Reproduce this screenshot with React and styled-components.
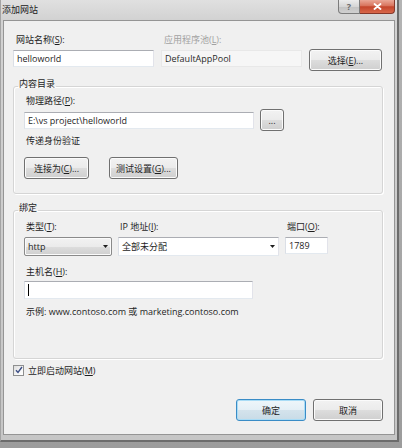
import React from 'react';
import styled, { createGlobalStyle, css } from 'styled-components';

const FONT = `"Open Sans", "Noto Sans CJK SC", sans-serif`;

const GlobalStyle = createGlobalStyle`
  html, body { margin: 0; padding: 0; }
  body { background: #a8a8a8; font-family: ${FONT}; }
  *, *::before, *::after { box-sizing: border-box; }
`;

const Page = styled.div`
  width: 402px;
  height: 448px;
  background: linear-gradient(to bottom, #b4b4b4, #9c9c9c);
`;

const Window = styled.div`
  width: 399px;
  height: 442px;
  display: flex;
  flex-direction: column;
  background: linear-gradient(to bottom, #e0e0e0 0px, #d2d2d2 20px, #c6c6c6 100%);
  border-left: 1px solid #a4a4a4;
  border-right: 2px solid #6c6c6c;
  border-bottom: 2px solid #6c6c6c;
  font-family: ${FONT};
  font-size: 9px;
  color: #1e1e1e;
`;

const TitleBar = styled.div`
  height: 20px;
  flex: none;
  display: flex;
  align-items: flex-start;
  justify-content: space-between;
  padding: 0 2px 0 1px;
`;

const Title = styled.span`
  line-height: 20px;
  color: #202020;
`;

const CaptionButtons = styled.div`
  display: flex;
  height: 14px;
`;

const HelpButton = styled.div`
  width: 22px;
  height: 14px;
  display: flex;
  align-items: center;
  justify-content: center;
  border: 1px solid #7c7c7c;
  border-top: none;
  border-radius: 0 0 0 4px;
  background: linear-gradient(to bottom, #ececec 0%, #d6d6d6 50%, #c2c2c2 51%, #d0d0d0 100%);
  color: #6a6a6a;
  font-weight: bold;
  font-size: 9px;
`;

const CloseButton = styled.div`
  width: 35px;
  height: 14px;
  display: flex;
  align-items: center;
  justify-content: center;
  border: 1px solid #85382a;
  border-top: none;
  border-left: none;
  border-radius: 0 0 4px 0;
  background: linear-gradient(to bottom, #eaa796 0%, #d8735c 45%, #c4452b 52%, #d8674a 100%);
`;

const Client = styled.div`
  flex: 1;
  margin: 0 2px 5px 2px;
  border: 1px solid #959595;
  background: #f0f0f0;
  padding: 13px 11px 0 9px;
  display: flex;
  flex-direction: column;
`;

const TopGrid = styled.div`
  display: grid;
  grid-template-columns: 141px 141px 73px;
  column-gap: 7px;
  row-gap: 3px;
  align-items: start;
`;

const Label = styled.div`
  line-height: 12px;
  height: 12px;
  white-space: nowrap;
  padding-left: ${p => p.$indent ?? 2}px;
  margin-top: ${p => p.$mt ?? 0}px;
  color: ${p => (p.$disabled ? '#a2a2a2' : '#1e1e1e')};
`;

const TextBox = styled.div`
  height: ${p => p.$h ?? 17}px;
  width: ${p => (p.$w ? `${p.$w}px` : 'auto')};
  margin-top: ${p => p.$mt ?? 0}px;
  display: flex;
  align-items: center;
  padding: 0 3px;
  border: 1px solid;
  white-space: nowrap;
  overflow: hidden;
  ${p =>
    p.$disabled
      ? css`
          border-color: #e8e8e8;
          background: #f6f6f6;
          color: #2a2a2a;
        `
      : css`
          border-color: #abadb3 #e2e3ea #e3e9ef #dbdfe6;
          background: #fff;
        `}
`;

const Caret = styled.span`
  width: 1px;
  height: 12px;
  background: #000;
`;

const Button = styled.button`
  height: 22px;
  width: ${p => p.$w}px;
  padding: 0;
  margin: 0;
  font: 9px ${FONT};
  color: #1e1e1e;
  border: 1px solid ${p => (p.$default ? '#3a8cc6' : '#707070')};
  border-radius: 3px;
  background: ${p =>
    p.$default
      ? 'linear-gradient(to bottom, #eef6fa 0%, #e4eff6 50%, #d4e3ec 51%, #c8dbe6 100%)'
      : 'linear-gradient(to bottom, #f2f2f2 0%, #ebebeb 50%, #dddddd 51%, #cfcfcf 100%)'};
  box-shadow: inset 0 0 0 1px ${p => (p.$default ? '#a9dcf6' : '#fbfbfb')};
`;

const Group = styled.fieldset`
  margin: ${p => p.$mt}px 0 0 0;
  padding: 0 0 ${p => p.$pb}px 4px;
  border: 1px solid #d5d5d5;
  border-radius: 3px;
  box-shadow: inset 1px 1px 0 #fff, 1px 1px 0 #fff;
  min-width: 0;
`;

const Legend = styled.legend`
  padding: 2px 1px 6px;
  margin: 0;
  line-height: 12px;
  font-size: 9px;
`;

const GroupBody = styled.div`
  padding-left: 6px;
  display: flex;
  flex-direction: column;
  align-items: flex-start;
`;

const Row = styled.div`
  display: flex;
  align-items: center;
  gap: ${p => p.$gap ?? 0}px;
  margin-top: ${p => p.$mt ?? 0}px;
`;

const BindGrid = styled.div`
  display: grid;
  grid-template-columns: 88px 161px 43px;
  column-gap: 6px;
  row-gap: 4px;
  margin-top: 1px;
  align-items: start;
`;

const Select = styled.div`
  height: 19px;
  display: flex;
  align-items: center;
  justify-content: space-between;
  padding: 0 3px 0 3px;
  ${p =>
    p.$flat
      ? css`
          border: 1px solid;
          border-color: #abadb3 #e2e3ea #e3e9ef #dbdfe6;
          background: #fff;
        `
      : css`
          border: 1px solid #8a8a8a;
          border-radius: 2px;
          background: linear-gradient(to bottom, #f2f2f2 0%, #ebebeb 50%, #dddddd 51%, #cfcfcf 100%);
          box-shadow: inset 0 0 0 1px #fbfbfb;
        `}
`;

const Arrow = () => (
  <svg width="5" height="3" viewBox="0 0 5 3">
    <path d="M0 0 H5 L2.5 3 Z" fill="#1e1e1e" />
  </svg>
);

const CheckRow = styled.label`
  display: flex;
  align-items: center;
  gap: 4px;
  margin-top: 5px;
  height: 12px;
`;

const CheckBox = styled.span`
  width: 11px;
  height: 11px;
  display: flex;
  align-items: center;
  justify-content: center;
  border: 1px solid #8e8f8f;
  background: linear-gradient(135deg, #dcdcdc 0%, #f6f6f6 60%, #ffffff 100%);
`;

const Footer = styled.div`
  display: flex;
  justify-content: flex-end;
  gap: 7px;
  margin-top: 23px;
`;

const K = styled.u`
  text-decoration: underline;
  text-underline-offset: 1px;
`;

export default function App() {
  return (
    <>
      <GlobalStyle />
      <Page>
        <Window>
          <TitleBar>
            <Title>添加网站</Title>
            <CaptionButtons>
              <HelpButton>?</HelpButton>
              <CloseButton>
                <svg width="9" height="7" viewBox="0 0 9 7">
                  <path d="M1.5 1 L7.5 6 M7.5 1 L1.5 6" stroke="#fff" strokeWidth="1.8" strokeLinecap="round" />
                </svg>
              </CloseButton>
            </CaptionButtons>
          </TitleBar>
          <Client>
            <TopGrid>
              <Label $indent={3}>网站名称(<K>S</K>):</Label>
              <Label $indent={3} $disabled>应用程序池(<K>L</K>):</Label>
              <span />
              <TextBox $mt={1}>helloworld</TextBox>
              <TextBox $mt={1} $disabled>DefaultAppPool</TextBox>
              <Button $w={73}>选择(<K>E</K>)...</Button>
            </TopGrid>

            <Group $mt={5} $pb={14}>
              <Legend>内容目录</Legend>
              <GroupBody>
                <Label $mt={-1}>物理路径(<K>P</K>):</Label>
                <Row $gap={6} $mt={2}>
                  <TextBox $w={230}>E:\vs project\helloworld</TextBox>
                  <Button $w={24}>...</Button>
                </Row>
                <Label $mt={4}>传递身份验证</Label>
                <Row $gap={20} $mt={10}>
                  <Button $w={65}>连接为(<K>C</K>)...</Button>
                  <Button $w={69}>测试设置(<K>G</K>)...</Button>
                </Row>
              </GroupBody>
            </Group>

            <Group $mt={6} $pb={40}>
              <Legend>绑定</Legend>
              <GroupBody>
                <BindGrid>
                  <Label>类型(<K>T</K>):</Label>
                  <Label>IP 地址(<K>I</K>):</Label>
                  <Label>端口(<K>O</K>):</Label>
                  <Select>
                    <span>http</span>
                    <Arrow />
                  </Select>
                  <Select $flat>
                    <span>全部未分配</span>
                    <Arrow />
                  </Select>
                  <TextBox>1789</TextBox>
                </BindGrid>
                <Label $mt={10}>主机名(<K>H</K>):</Label>
                <TextBox $w={229} $h={18} $mt={3}>
                  <Caret />
                </TextBox>
                <Label $mt={7}>示例: www.contoso.com 或 marketing.contoso.com</Label>
              </GroupBody>
            </Group>

            <CheckRow>
              <CheckBox>
                <svg width="8" height="8" viewBox="0 0 8 8">
                  <path d="M1 4.2 L3 6.5 L7 1" stroke="#3d4f86" strokeWidth="1.4" fill="none" />
                </svg>
              </CheckBox>
              <span>立即启动网站(<K>M</K>)</span>
            </CheckRow>

            <Footer>
              <Button $w={70} $default>确定</Button>
              <Button $w={70}>取消</Button>
            </Footer>
          </Client>
        </Window>
      </Page>
    </>
  );
}
